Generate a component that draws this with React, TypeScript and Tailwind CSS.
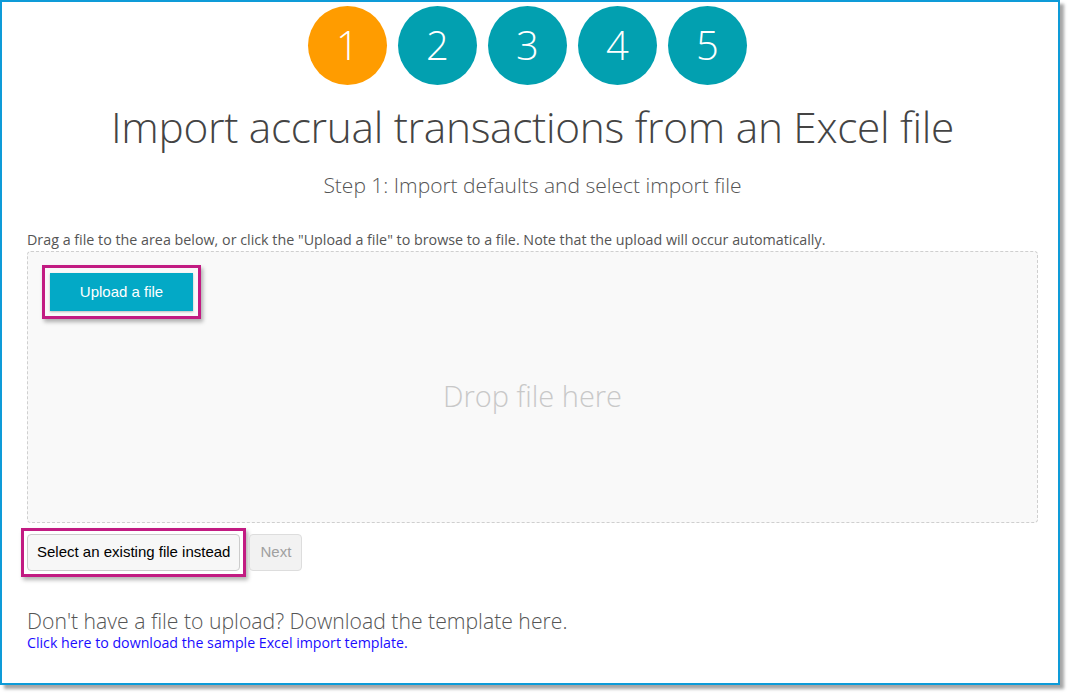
import React from "react";

const steps = [1, 2, 3, 4, 5];

function StepBadge({ n, active }: { n: number; active: boolean }) {
    return (
        <div
            className={`flex h-[79px] w-[79px] items-center justify-center rounded-full text-[40px] font-light leading-none text-white ${
                active ? "bg-[#ff9c00]" : "bg-[#02a0b0]"
            }`}
        >
            <span className="-mt-[2px]">{n}</span>
        </div>
    );
}

export default function App() {
    return (
        <div className="h-[694px] w-[1070px] bg-white">
            <div
                className="flex h-[685px] w-[1060px] flex-col border-2 border-[#0e9bd8] bg-white pl-[25px] pr-[20px] shadow-[4px_4px_3px_rgba(0,0,0,0.35)]"
                style={{ fontFamily: "'Open Sans', 'Liberation Sans', sans-serif" }}
            >
                <div className="mt-[4px] flex justify-center gap-[11px] pr-[10px]">
                    {steps.map((n) => (
                        <StepBadge key={n} n={n} active={n === 1} />
                    ))}
                </div>

                <h1 className="mt-[14px] text-center text-[42.4px] font-light leading-[56px] tracking-[-0.3px] text-[#444]">
                    Import accrual transactions from an Excel file
                </h1>
                <h2 className="mt-[16px] text-center text-[21px] font-light leading-[28px] text-[#555]">
                    Step 1: Import defaults and select import file
                </h2>

                <p className="mt-[32px] text-[14.3px] leading-[18px] text-[#555]">
                    Drag a file to the area below, or click the "Upload a file" to browse to a file. Note that the upload will occur automatically.
                </p>

                <div className="mt-[2px] flex h-[272px] flex-col rounded-[4px] border border-dashed border-[#cfcfcf] bg-[#f9f9f9] pl-[14px] pt-[13px]">
                    <div className="w-fit border-[3px] border-[#c21b82] p-[5px] shadow-[2px_3px_4px_rgba(0,0,0,0.3)]">
                        <button
                            className="flex h-[38px] w-[143px] items-center justify-center bg-[#03a9c6] text-[15px] text-white shadow-[0_1px_2px_rgba(0,0,0,0.25)]"
                            style={{ fontFamily: "'Liberation Sans', Arial, sans-serif" }}
                        >
                            Upload a file
                        </button>
                    </div>
                    <div className="flex flex-1 items-center justify-center pb-[50px] pr-[14px] text-[29px] font-light text-[#c8c8c8]">
                        Drop file here
                    </div>
                </div>

                <div
                    className="mt-[5px] flex items-center gap-[3px]"
                    style={{ fontFamily: "'Liberation Sans', Arial, sans-serif" }}
                >
                    <div className="-ml-[6px] border-[3px] border-[#c21b82] p-[3px] shadow-[2px_3px_4px_rgba(0,0,0,0.3)]">
                        <button className="flex h-[37px] items-center rounded-[4px] border border-[#cccccc] bg-[#f7f7f7] px-[9px] text-[15px] text-black">
                            Select an existing file instead
                        </button>
                    </div>
                    <button className="flex h-[37px] items-center rounded-[4px] border border-[#dddddd] bg-[#f2f2f2] px-[10px] text-[15px] text-[#a0a0a0]">
                        Next
                    </button>
                </div>

                <h3 className="mt-[31px] text-[21.2px] font-light leading-[26px] text-[#555]">
                    Don't have a file to upload? Download the template here.
                </h3>
                <a className="text-[14.2px] leading-[18px] text-[#1a0dff]" href="#">
                    Click here to download the sample Excel import template.
                </a>
            </div>
        </div>
    );
}
